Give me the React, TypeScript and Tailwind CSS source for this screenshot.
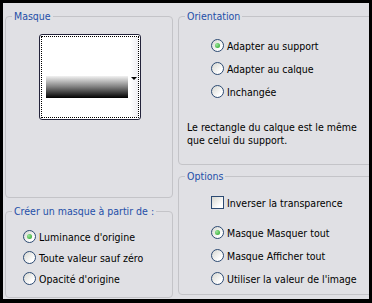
import type { ReactNode } from "react";

const font = { fontFamily: '"DejaVu Sans Condensed", "Liberation Sans", Arial, sans-serif', fontStretch: "condensed" };

function Group({ label, className, children }: { label: string; className: string; children: ReactNode }) {
  return (
    <fieldset className={`rounded-[4px] border border-[#c4c4c8] ${className}`}>
      <legend className="ml-[6px] px-[2px] text-[10.5px] leading-[14px] text-[#1f4fa8]">{label}</legend>
      {children}
    </fieldset>
  );
}

function Radio({ checked = false }: { checked?: boolean }) {
  return (
    <span className="flex h-[13px] w-[13px] shrink-0 items-center justify-center rounded-full border border-[#2c4a72] bg-[linear-gradient(135deg,#d6d6d0,#ffffff_75%)]">
      {checked ? <span className="h-[5px] w-[5px] rounded-full bg-[radial-gradient(circle_at_35%_35%,#9be59b,#21a121)]" /> : null}
    </span>
  );
}

function Option({ label, checked, h }: { label: string; checked?: boolean; h: string }) {
  return (
    <div className={`flex items-center gap-[3px] ${h}`}>
      <Radio checked={checked} />
      <span className="text-[10.5px] leading-[14px] text-black">{label}</span>
    </div>
  );
}

export default function App() {
  return (
    <div className="h-[303px] w-[372px] bg-black pl-[3px] pt-[3px]" style={font}>
      <div className="flex h-[296px] w-[366px] gap-[5px] overflow-hidden bg-[#e0e0e4] pl-[2px] pt-[6px]">
        <div className="flex w-[168px] shrink-0 flex-col gap-[6px]">
          <Group label="Masque" className="h-[189px]">
            <div className="relative ml-[33px] mt-[11px] h-[86px] w-[102px] rounded-[3px] border border-[#23233a] bg-white p-[1px]">
              <div className="relative h-full w-full border border-dotted border-black">
                <div className="absolute right-0 top-0 h-full w-[8px] bg-[linear-gradient(to_right,#ffffff,#eeeef2)]" />
                <div className="absolute left-[4px] top-[39px] h-[22px] w-[82px] bg-[linear-gradient(to_bottom,#f2f2f2,#8a8a8a_45%,#000000)]" />
                <div className="absolute right-[1px] top-[40px] h-0 w-0 border-x-[3px] border-t-[3px] border-x-transparent border-t-black" />
              </div>
            </div>
          </Group>
          <Group label="Créer un masque à partir de :" className="h-[94px]">
            <div className="mt-[8px] pl-[17px]">
              <Option label="Luminance d'origine" checked h="h-[21px]" />
              <Option label="Toute valeur sauf zéro" h="h-[21px]" />
              <Option label="Opacité d'origine" h="h-[21px]" />
            </div>
          </Group>
        </div>
        <div className="flex w-[200px] shrink-0 flex-col gap-[4px]">
          <Group label="Orientation" className="h-[156px]">
            <div className="mt-[11px] pl-[32px]">
              <Option label="Adapter au support" checked h="h-[23px]" />
              <Option label="Adapter au calque" h="h-[23px]" />
              <Option label="Inchangée" h="h-[23px]" />
            </div>
            <p className="mt-[18px] whitespace-nowrap pl-[8px] text-[10.5px] leading-[13px] text-black">
              Le rectangle du calque est le même
              <br />
              que celui du support.
            </p>
          </Group>
          <Group label="Options" className="h-[126px]">
            <div className="mt-[9px] pl-[32px]">
              <div className="flex h-[21px] items-center gap-[3px]">
                <span className="h-[13px] w-[13px] shrink-0 border border-[#2c4a72] bg-[linear-gradient(135deg,#d6d6d0,#ffffff_75%)]" />
                <span className="text-[10.5px] leading-[14px] text-black">Inverser la transparence</span>
              </div>
              <div className="mt-[8px]">
                <Option label="Masque Masquer tout" checked h="h-[23px]" />
                <Option label="Masque Afficher tout" h="h-[23px]" />
                <Option label="Utiliser la valeur de l'image" h="h-[23px]" />
              </div>
            </div>
          </Group>
        </div>
      </div>
    </div>
  );
}
